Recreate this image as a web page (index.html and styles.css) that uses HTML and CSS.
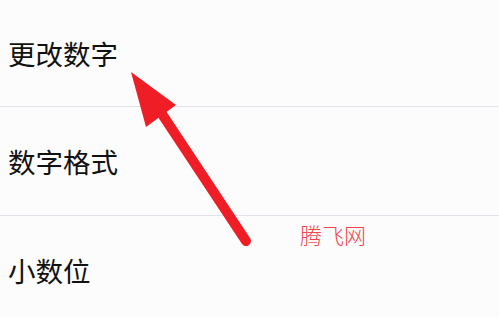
FILE: index.html
```html
<!DOCTYPE html>
<html lang="zh">
<head>
<meta charset="utf-8">
<link rel="stylesheet" href="styles.css">
</head>
<body>
<div class="page">
  <ul class="menu">
    <li class="item item-first">更改数字</li>
    <li class="item">数字格式</li>
    <li class="item item-last">小数位</li>
  </ul>
  <svg class="arrow" width="499" height="318" viewBox="0 0 499 318">
    <line x1="246" y1="241" x2="158" y2="108" stroke="#ee1d26" stroke-width="10" stroke-linecap="round"/>
    <polygon points="131,72 176,105 146,127" fill="#ee1d26"/>
  </svg>
  <div class="watermark">腾飞网</div>
</div>
</body>
</html>
```
FILE: styles.css
```css
html, body {
  margin: 0;
  padding: 0;
  background: #fcfcfd;
}
.page {
  position: relative;
  width: 499px;
  height: 318px;
  overflow: hidden;
  font-family: "Noto Sans CJK SC", "Noto Sans", sans-serif;
}
.menu {
  list-style: none;
  margin: 0;
  padding: 0;
}
.item {
  display: flex;
  align-items: center;
  height: 108px;
  padding-left: 8px;
  font-size: 27.5px;
  color: #111;
  border-bottom: 1px solid #dfe3e9;
}
.item-first {
  height: 106px;
}
.item-last {
  border-bottom: none;
}
.arrow {
  position: absolute;
  left: 0;
  top: 0;
}
.watermark {
  position: absolute;
  left: 300px;
  top: 218px;
  font-size: 22px;
  font-weight: 300;
  color: #f0464c;
  font-family: "Noto Sans CJK SC", sans-serif;
}
```
